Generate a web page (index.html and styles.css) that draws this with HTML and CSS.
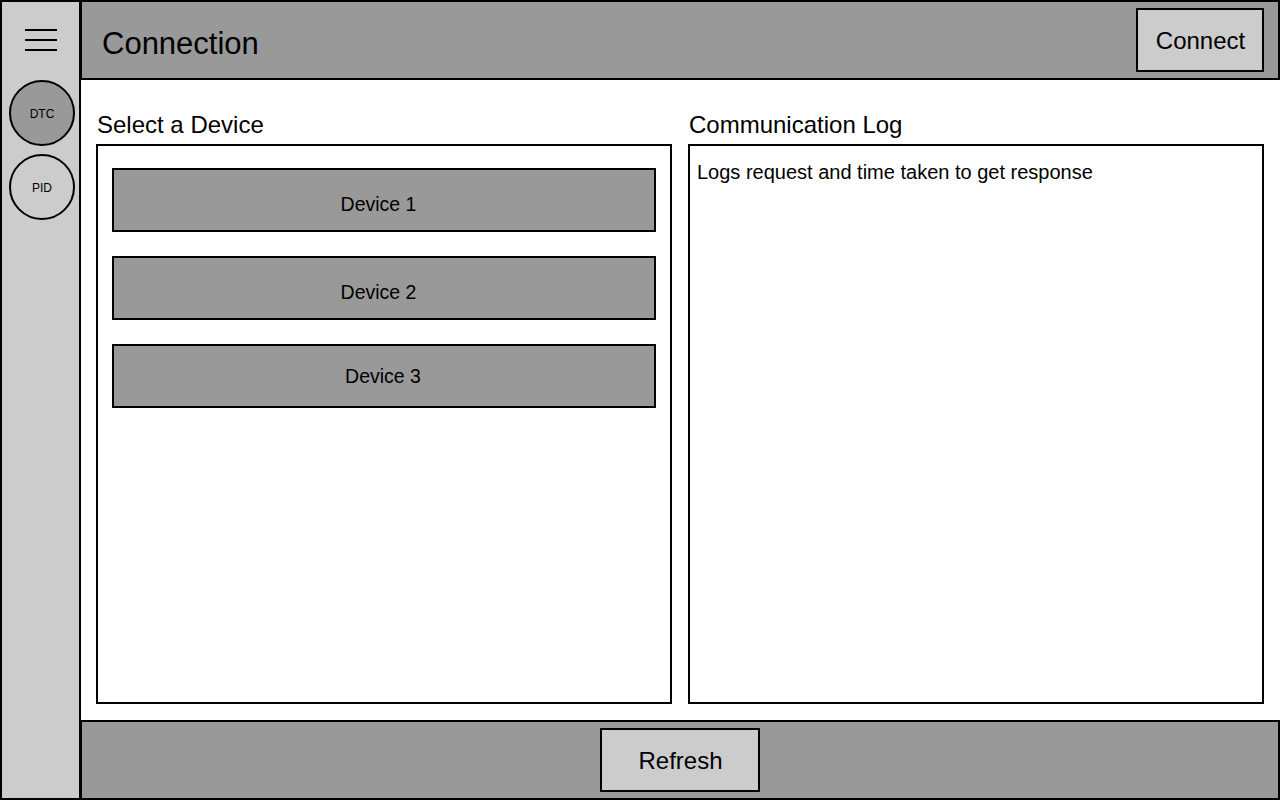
FILE: index.html
```html
<!DOCTYPE html>
<html lang="en">
<head>
<meta charset="utf-8">
<title>Connection</title>
<link rel="stylesheet" href="styles.css">
</head>
<body>
<div class="app">
  <aside class="sidebar">
    <svg class="menu-icon" width="32" height="22" viewBox="0 0 32 22" aria-hidden="true">
      <line x1="0" y1="1" x2="32" y2="1" stroke="#000" stroke-width="2"/>
      <line x1="0" y1="11" x2="32" y2="11" stroke="#000" stroke-width="2"/>
      <line x1="0" y1="21" x2="32" y2="21" stroke="#000" stroke-width="2"/>
    </svg>
    <div class="nav-circle nav-active">DTC</div>
    <div class="nav-circle">PID</div>
  </aside>
  <div class="main">
    <header class="topbar">
      <h1 class="title">Connection</h1>
      <button class="btn">Connect</button>
    </header>
    <section class="content">
      <div class="column">
        <div class="label">Select a Device</div>
        <div class="panel device-list">
          <div class="device device-low">Device 1</div>
          <div class="device device-low">Device 2</div>
          <div class="device device-high">Device 3</div>
        </div>
      </div>
      <div class="column">
        <div class="label">Communication Log</div>
        <div class="panel log">Logs request and time taken to get response</div>
      </div>
    </section>
    <footer class="bottombar">
      <button class="btn refresh">Refresh</button>
    </footer>
  </div>
</div>
</body>
</html>
```
FILE: styles.css
```css
* { box-sizing: border-box; }
html, body {
  margin: 0;
  padding: 0;
  background: #fff;
  font-family: "Liberation Sans", Arial, sans-serif;
  color: #000;
}
.app {
  display: flex;
  width: 1280px;
  height: 800px;
}
.sidebar {
  width: 81px;
  flex: none;
  background: #cccccc;
  border: 2px solid #000;
  display: flex;
  flex-direction: column;
  align-items: flex-start;
  padding: 27px 0 0 7px;
}
.menu-icon {
  display: block;
  margin-left: 16px;
  margin-bottom: 29px;
}
.nav-circle {
  width: 66px;
  height: 66px;
  border: 2px solid #000;
  border-radius: 50%;
  background: #cccccc;
  display: flex;
  align-items: center;
  justify-content: center;
  font-size: 12px;
  padding-top: 1px;
  margin-bottom: 8px;
}
.nav-active { background: #999999; }
.main {
  flex: 1;
  display: flex;
  flex-direction: column;
  min-width: 0;
}
.topbar {
  height: 80px;
  flex: none;
  background: #999999;
  border: 2px solid #000;
  border-left-width: 1px;
  display: flex;
  align-items: center;
  justify-content: space-between;
  padding: 0 14px 0 20px;
}
.title {
  margin: 0;
  font-size: 31px;
  font-weight: normal;
  padding-top: 7px;
}
.btn {
  font-family: "Liberation Sans", Arial, sans-serif;
  font-size: 24px;
  color: #000;
  background: #cccccc;
  border: 2px solid #000;
  width: 128px;
  height: 64px;
  padding: 2px 0 0 1px;
  border-radius: 0;
}
.content {
  flex: 1;
  display: grid;
  grid-template-columns: 1fr 1fr;
  gap: 16px;
  padding: 32px 16px 16px 15px;
  min-height: 0;
}
.column {
  display: flex;
  flex-direction: column;
  min-height: 0;
}
.label {
  font-size: 24px;
  line-height: 26px;
  margin-bottom: 6px;
  padding-left: 1px;
}
.panel {
  flex: 1;
  border: 2px solid #000;
  background: #fff;
}
.device-list {
  display: flex;
  flex-direction: column;
  gap: 24px;
  padding: 22px 14px;
}
.device {
  height: 64px;
  background: #999999;
  border: 2px solid #000;
  display: flex;
  align-items: center;
  justify-content: center;
  font-size: 19.5px;
}
.device-low { padding: 8px 11px 0 0; }
.device-high { padding: 0 2px 0 0; }
.log {
  font-size: 20px;
  padding: 15px 7px;
}
.bottombar {
  height: 80px;
  flex: none;
  background: #999999;
  border: 2px solid #000;
  border-left-width: 1px;
  display: flex;
  align-items: center;
  justify-content: center;
}
.refresh { width: 160px; }
```
